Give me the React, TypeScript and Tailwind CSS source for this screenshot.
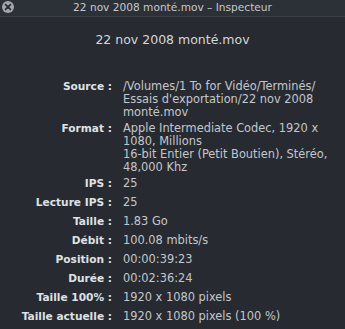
import React from "react";

const rows: { label: string; lines: string[] }[] = [
  { label: "Source :", lines: ["/Volumes/1 To for Vidéo/Terminés/", "Essais d'exportation/22 nov 2008", "monté.mov"] },
  { label: "Format :", lines: ["Apple Intermediate Codec, 1920 x", "1080, Millions", "16-bit Entier (Petit Boutien), Stéréo,", "48,000 Khz"] },
  { label: "IPS :", lines: ["25"] },
  { label: "Lecture IPS :", lines: ["25"] },
  { label: "Taille :", lines: ["1.83 Go"] },
  { label: "Débit :", lines: ["100.08 mbits/s"] },
  { label: "Position :", lines: ["00:00:39:23"] },
  { label: "Durée :", lines: ["00:02:36:24"] },
  { label: "Taille 100% :", lines: ["1920 x 1080 pixels"] },
  { label: "Taille actuelle :", lines: ["1920 x 1080 pixels (100 %)"] },
];

export default function App() {
  return (
    <div
      className="w-[345px] h-[329px] overflow-hidden bg-[#272b31] flex flex-col"
      style={{ fontFamily: '"DejaVu Sans", "Liberation Sans", sans-serif' }}
    >
      <div className="h-[17px] shrink-0 relative flex items-center justify-center bg-[#2c3037] border-b border-[#3b4047]">
        <div className="absolute left-[2px] top-[1px] w-[12px] h-[12px] rounded-full bg-[#a3a7ad] flex items-center justify-center">
          <svg width="8" height="8" viewBox="0 0 8 8">
            <path d="M1.6 1.6 L6.4 6.4 M6.4 1.6 L1.6 6.4" stroke="#2a2d33" strokeWidth="1.8" strokeLinecap="round" />
          </svg>
        </div>
        <span className="text-[10.6px] leading-[13px] text-[#c4c8cd] mt-[-1px]">22 nov 2008 monté.mov – Inspecteur</span>
      </div>
      <div className="mt-[15px] text-center text-[12.5px] leading-[16px] text-[#d4d7db]">22 nov 2008 monté.mov</div>
      <div className="mt-[32px] flex flex-col">
        {rows.map((r) => (
          <div key={r.label} className="flex min-h-[19px] pb-[3px] leading-[13px]">
            <div className="w-[112px] shrink-0 text-right font-bold text-[10.6px] text-[#dfe1e4] whitespace-nowrap">{r.label}</div>
            <div className="pl-[11px] text-[11.4px] text-[#c3c7cc] flex flex-col">
              {r.lines.map((l, i) => (
                <span key={i} className="whitespace-nowrap">{l}</span>
              ))}
            </div>
          </div>
        ))}
      </div>
    </div>
  );
}
